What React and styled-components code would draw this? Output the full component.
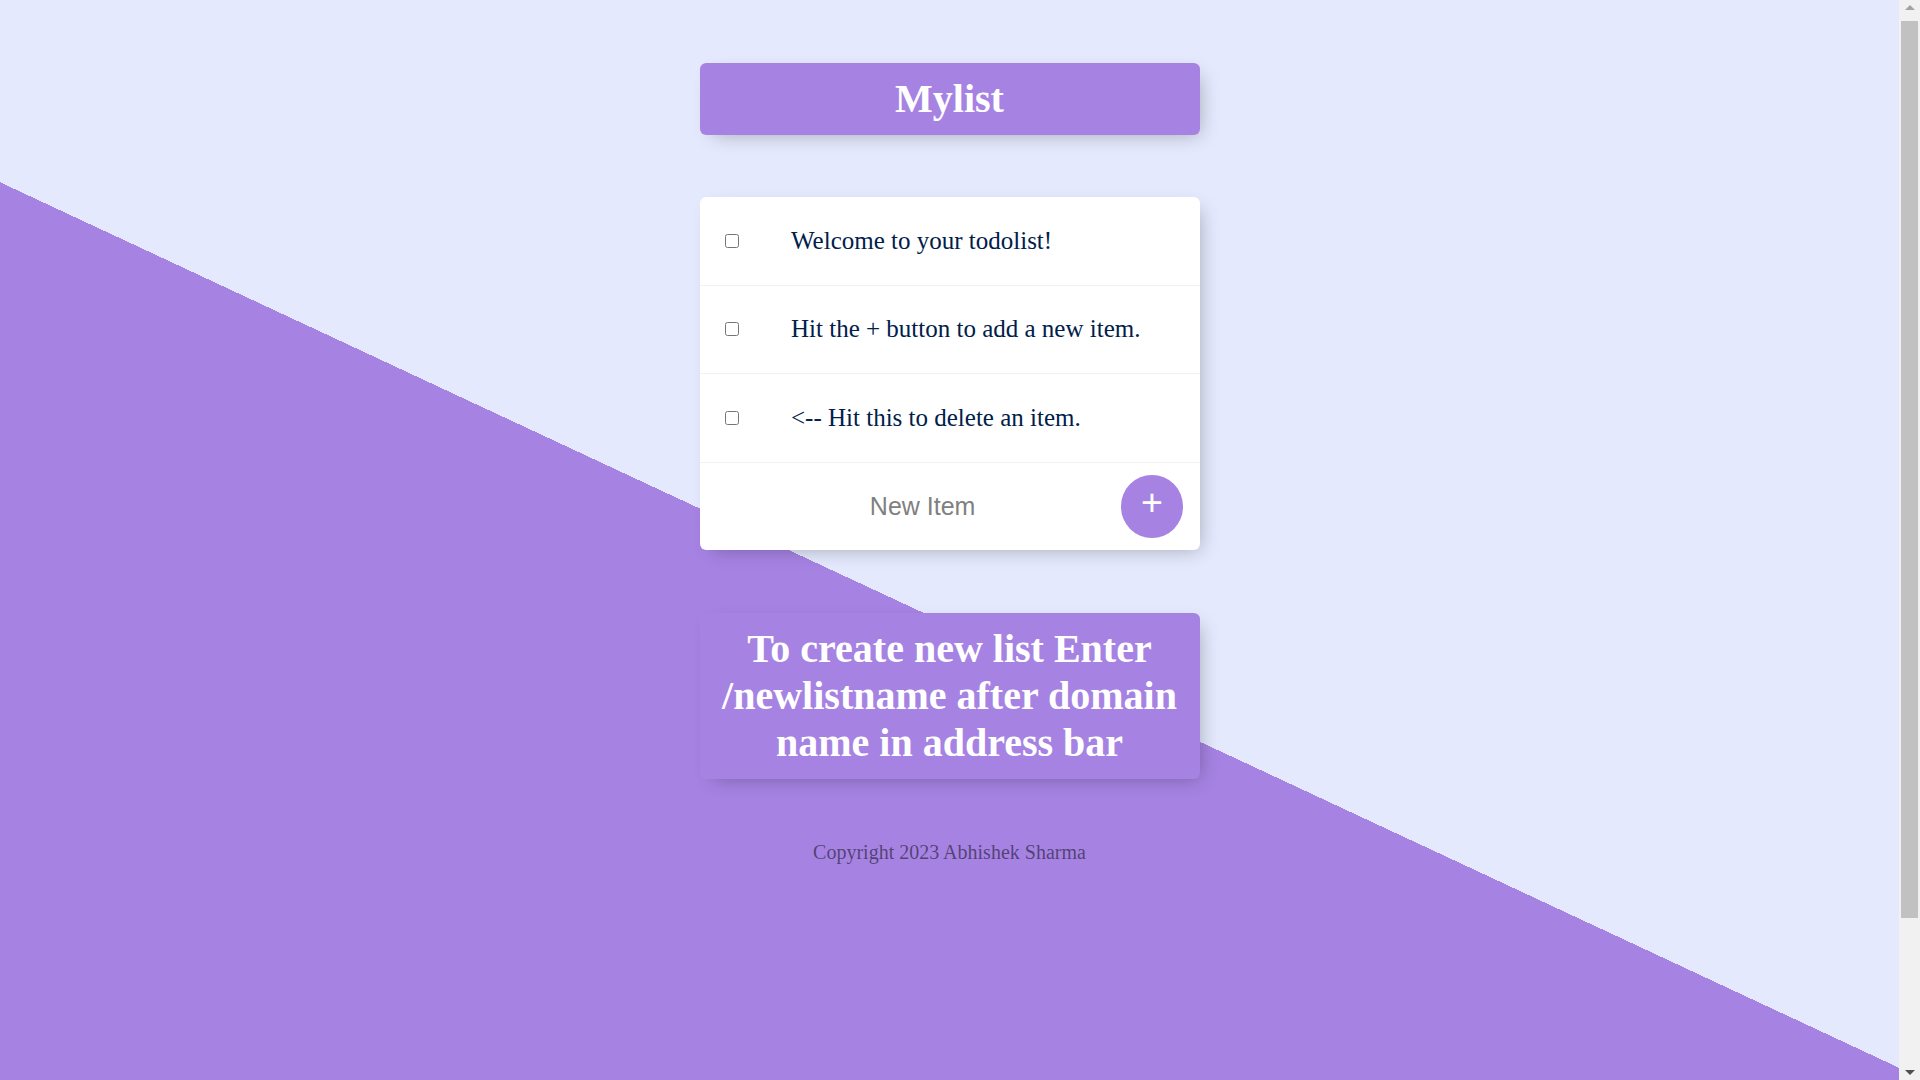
import React from "react";
import styled, { createGlobalStyle } from "styled-components";

const GlobalStyle = createGlobalStyle`
  html {
    width: calc(100vw - 21px);
    background-color: #E4E9FD;
    background-image: linear-gradient(25deg, #A683E3 50%, #E4E9FD 50%);
    min-height: 1250px;
    font-family: "Liberation Serif", "Times New Roman", serif;
    overflow: hidden;
  }
  body {
    margin: 0;
  }
`;

const Page = styled.main`
  display: flow-root;
  padding: 62.5px 10px 0;
`;

const Card = styled.div`
  max-width: 500px;
  margin: 0 auto 62.5px;
  background: ${(p) => (p.$accent ? "#A683E3" : "#ffffff")};
  text-align: ${(p) => (p.$accent ? "center" : "left")};
  border-radius: 6.25px;
  box-shadow: 6.25px 6.25px 18.75px -6.25px rgba(0, 0, 0, 0.3);
`;

const Title = styled.h1`
  margin: 0;
  padding: 12.5px;
  color: #ffffff;
  font-size: 40px;
  font-weight: bold;
  font-family: "Liberation Serif", "Times New Roman", serif;
`;

const Item = styled.div`
  min-height: 87.5px;
  display: flex;
  align-items: center;
  border-bottom: 1px solid #f1f1f1;
  &:last-child {
    border-bottom: 0;
  }
`;

const Check = styled.input.attrs({ type: "checkbox" })`
  width: 14px;
  height: 14px;
  margin: 25px;
  flex: none;
`;

const ItemText = styled.p`
  text-align: left;
  margin: 0;
  padding: 25px 25px 25px 27.5px;
  font-size: 25px;
  font-weight: 200;
  color: #00204a;
`;

const AddForm = styled.form`
  min-height: 87.5px;
  display: flex;
  align-items: center;
  text-align: center;
  margin-left: 25px;
`;

const TextInput = styled.input.attrs({ type: "text" })`
  text-align: center;
  height: 75px;
  width: 391.25px;
  padding: 1.25px 2.5px;
  border: none;
  background: transparent;
  font-family: "Liberation Sans", Arial, sans-serif;
  font-size: 25px;
  font-weight: 200;
  color: #333;
  &::placeholder {
    color: grey;
    opacity: 1;
  }
  &:focus {
    outline: none;
    box-shadow: inset 0 -3.75px 0 0 #A683E3;
  }
`;

const AddButton = styled.button`
  min-height: 62.5px;
  width: 62.5px;
  flex: none;
  border-radius: 50%;
  border: 0;
  background-color: #A683E3;
  color: #ffffff;
  font-family: "Liberation Sans", Arial, sans-serif;
  font-size: 37.5px;
  padding: 0 0 7.5px 0;
  cursor: pointer;
`;

const Footer = styled.footer`
  color: rgba(0, 0, 0, 0.5);
  text-align: center;
  font-size: 20px;
`;

/* Window scrollbar drawn over the right edge, as in the capture */
const ScrollBar = styled.div`
  position: fixed;
  top: 0;
  right: 0;
  width: 21px;
  height: 100vh;
  background: #f1f1f1;
  display: flex;
  flex-direction: column;
`;

const ScrollArrow = styled.div`
  height: 21px;
  flex: none;
  display: flex;
  align-items: center;
  justify-content: center;
  &::before {
    content: "";
    width: 0;
    height: 0;
    border-left: 5px solid transparent;
    border-right: 5px solid transparent;
    ${(p) =>
      p.$down
        ? "border-top: 5px solid #505050; margin-top: 6px;"
        : "border-bottom: 5px solid #a3a3a3; margin-top: -6px;"}
  }
`;

const ScrollTrack = styled.div`
  flex: 1;
  padding: 0 2px;
`;

const ScrollThumb = styled.div`
  height: 897px;
  background: #c1c1c1;
`;

const items = [
  "Welcome to your todolist!",
  "Hit the + button to add a new item.",
  "<-- Hit this to delete an item.",
];

export default function App() {
  return (
    <>
      <GlobalStyle />
      <Page>
        <Card $accent>
          <Title>Mylist</Title>
        </Card>
        <Card>
          {items.map((t) => (
            <Item key={t}>
              <Check />
              <ItemText>{t}</ItemText>
            </Item>
          ))}
          <Item as={AddForm} onSubmit={(e) => e.preventDefault()}>
            <TextInput name="newItem" placeholder="New Item" autoComplete="off" />
            <AddButton type="submit">+</AddButton>
          </Item>
        </Card>
        <Card $accent>
          <Title>To create new list Enter /newlistname after domain name in address bar</Title>
        </Card>
        <Footer>Copyright 2023 Abhishek Sharma</Footer>
      </Page>
      <ScrollBar aria-hidden="true">
        <ScrollArrow />
        <ScrollTrack>
          <ScrollThumb />
        </ScrollTrack>
        <ScrollArrow $down />
      </ScrollBar>
    </>
  );
}
